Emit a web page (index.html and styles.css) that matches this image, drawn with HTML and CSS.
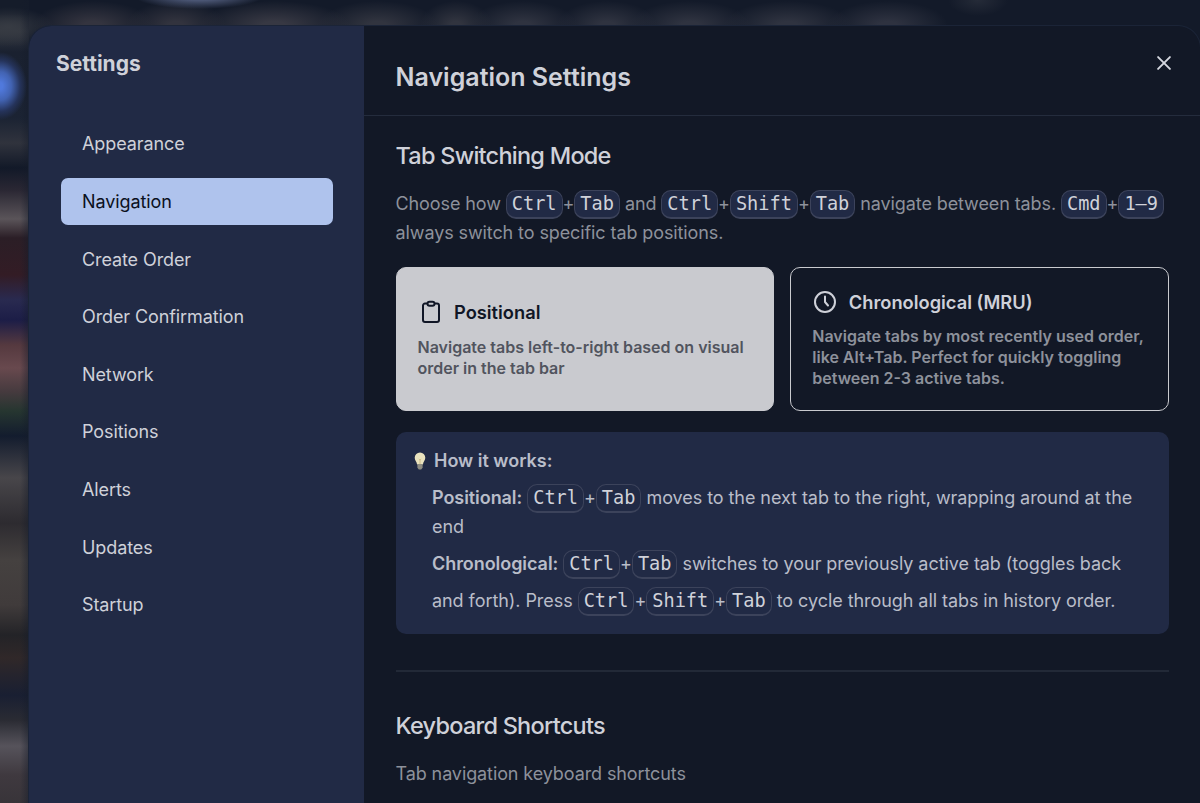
FILE: index.html
```html
<!DOCTYPE html>
<html lang="en">
<head>
  <meta charset="UTF-8">
  <meta name="viewport" content="width=device-width, initial-scale=1.0">
  <title>Settings</title>
  <link rel="stylesheet" href="styles.css">
</head>
<body>
  <div class="modal">
    <aside class="sidebar">
      <h2 class="sidebar-title">Settings</h2>
      <nav class="menu">
        <a class="menu-item">Appearance</a>
        <a class="menu-item active">Navigation</a>
        <a class="menu-item">Create Order</a>
        <a class="menu-item">Order Confirmation</a>
        <a class="menu-item">Network</a>
        <a class="menu-item">Positions</a>
        <a class="menu-item">Alerts</a>
        <a class="menu-item">Updates</a>
        <a class="menu-item">Startup</a>
      </nav>
    </aside>

    <main class="content">
      <header class="content-header">
        <h1 class="page-title">Navigation Settings</h1>
        <button class="close" aria-label="Close">
          <svg width="14" height="14" viewBox="0 0 14 14" fill="none" stroke="currentColor" stroke-width="1.9" stroke-linecap="round"><path d="M1.1 1.1l11.8 11.8M12.9 1.1L1.1 12.9"/></svg>
        </button>
      </header>

      <section class="section">
        <h3 class="section-title">Tab Switching Mode</h3>
        <p class="lead">Choose how <kbd>Ctrl</kbd>+<kbd>Tab</kbd> and <kbd>Ctrl</kbd>+<kbd>Shift</kbd>+<kbd>Tab</kbd> navigate between tabs. <kbd>Cmd</kbd>+<kbd>1–9</kbd><br>always switch to specific tab positions.</p>

        <div class="modes">
          <div class="mode selected">
            <div class="mode-head">
              <svg class="mode-icon" viewBox="0 0 24 24" fill="none" stroke="currentColor" stroke-width="2" stroke-linejoin="round" stroke-linecap="round"><path d="M9 3.5H7a2 2 0 0 0-2 2V20a2 2 0 0 0 2 2h12a2 2 0 0 0 2-2V5.500a2 2 0 0 0-2-2h-2"/><rect x="9.500" y="1.800" width="7" height="4" rx="2"/></svg>
              <span class="mode-name">Positional</span>
            </div>
            <p class="mode-text">Navigate tabs left-to-right based on visual<br>order in the tab bar</p>
          </div>
          <div class="mode">
            <div class="mode-head">
              <svg class="mode-icon" viewBox="0 0 24 24" fill="none" stroke="currentColor" stroke-width="2" stroke-linejoin="round" stroke-linecap="round"><circle cx="13" cy="12" r="10"/><path d="M13 6.500V12l3 3.500"/></svg>
              <span class="mode-name">Chronological (MRU)</span>
            </div>
            <p class="mode-text">Navigate tabs by most recently used order,<br>like Alt+Tab. Perfect for quickly toggling<br>between 2-3 active tabs.</p>
          </div>
        </div>

        <div class="info">
          <div class="info-title">
            <svg class="bulb" viewBox="0 0 12 18"><path d="M6 .5A5.300 5.300 0 0 0 .7 5.800c0 2.600 2 3.800 2.400 6.700h5.800c.4-2.900 2.400-4.100 2.400-6.700A5.300 5.300 0 0 0 6 .5z" fill="#e9e2bd"/><path d="M4.800 7l1.200 1 1.200-1M6 8v4.500" stroke="#c3ad72" stroke-width=".7" fill="none"/><path d="M3.400 12.500h5.200v3.200L7.200 17.500H4.800l-1.400-1.800z" fill="#8e8d82"/></svg>
            <strong>How it works:</strong>
          </div>
          <p><strong>Positional:</strong> <kbd>Ctrl</kbd>+<kbd>Tab</kbd> moves to the next tab to the right, wrapping around at the<br>end</p>
          <p class="tall"><strong>Chronological:</strong> <kbd>Ctrl</kbd>+<kbd>Tab</kbd> switches to your previously active tab (toggles back<br>and forth). Press <kbd>Ctrl</kbd>+<kbd>Shift</kbd>+<kbd>Tab</kbd> to cycle through all tabs in history order.</p>
        </div>

        <hr class="divider">

        <h3 class="section-title">Keyboard Shortcuts</h3>
        <p class="lead">Tab navigation keyboard shortcuts</p>
      </section>
    </main>
  </div>
</body>
</html>
```
FILE: styles.css
```css
* { margin: 0; padding: 0; box-sizing: border-box; }

/* Blurred app behind the dialog */
body {
  height: 803px;
  padding: 26px 0 0 29px;
  overflow: hidden;
  font-family: Inter, "Liberation Sans", sans-serif;
  font-size: 18px;
  letter-spacing: -0.1px;
  color: #cfd1d9;
  background:
    radial-gradient(ellipse 27px 34px at 0 86px, #5079dc 10%, #4263b2 42%, #25335a 75%, transparent) no-repeat,
    radial-gradient(ellipse 66px 14px at 199px -5px, #4a5573 40%, transparent) no-repeat,
    radial-gradient(ellipse 60px 24px at 93px 25px, #34343f 15%, transparent) no-repeat,
    radial-gradient(ellipse 50px 24px at 176px 25px, #32333e 15%, transparent) no-repeat,
    radial-gradient(ellipse 76px 24px at 274px 25px, #373843 15%, transparent) no-repeat,
    radial-gradient(ellipse 60px 24px at 378px 25px, #31343f 15%, transparent) no-repeat,
    radial-gradient(ellipse 36px 24px at 456px 25px, #31343f 15%, transparent) no-repeat,
    radial-gradient(ellipse 54px 24px at 523px 25px, #2f3340 15%, transparent) no-repeat,
    radial-gradient(ellipse 50px 24px at 607px 25px, #2f3340 15%, transparent) no-repeat,
    radial-gradient(ellipse 60px 24px at 690px 25px, #2f3340 15%, transparent) no-repeat,
    radial-gradient(ellipse 64px 24px at 788px 25px, #2f3340 15%, transparent) no-repeat,
    radial-gradient(ellipse 60px 24px at 888px 25px, #2e3240 15%, transparent) no-repeat,
    radial-gradient(ellipse 30px 16px at 978px 0, #252b38, transparent) no-repeat,
    linear-gradient(90deg, transparent 20px, #141b2a77) 0 0 / 29px 803px no-repeat,
    radial-gradient(ellipse 46px 20px at 8px 27px, #373b43, transparent) no-repeat,
    linear-gradient(#151c2a 0, #151c2a 14px, #343840 31px, #1a2130 52px, #1b2333 118px, #30333d 143px, #121928 168px,
      #2a2733 190px, #5a5459 219px, #2b1e26 238px, #331c25 275px, #292a50 300px, #1c1d47 320px,
      #55393f 345px, #68494e 368px, #453a3e 392px, #263630 411px, #131c2e 436px, #48464a 478px,
      #2d2b30 523px, #454140 560px, #403b3b 605px, #232327 635px, #302829 658px, #191f32 695px,
      #2a2b33 720px, #56535b 746px, #3f393f 775px, #383439 100%) 0 0 / 29px 803px no-repeat,
    #131a29;
}

strong { font-weight: 600; }

/* Dialog */
.modal {
  display: flex;
  height: 777px;
  border-radius: 22px 22px 0 0;
  overflow: hidden;
  background: #121826;
  box-shadow: 0 0 0 1px #1b2437;
}

/* Sidebar */
.sidebar {
  width: 335px;
  flex-shrink: 0;
  padding: 24px 31px 0 32px;
  background: #212a45;
}
.sidebar-title {
  margin-left: -5px;
  font-size: 21px;
  line-height: 28px;
  font-weight: 700;
  letter-spacing: 0;
}
.menu {
  display: flex;
  flex-direction: column;
  gap: 10.6px;
  margin-top: 42.4px;
}
.menu-item {
  height: 47px;
  padding-left: 21px;
  border-radius: 7px;
  font-size: 18px;
  line-height: 47.6px;
}
.menu-item.active { background: #afc3ed; color: #0b1020; }

/* Content */
.content { flex: 1; }
.content-header {
  display: flex;
  justify-content: space-between;
  height: 90px;
  padding: 29px 29px 0 31.5px;
  border-bottom: 1px solid #242c3d;
}
.page-title {
  font-size: 25px;
  line-height: 44px;
  font-weight: 600;
  letter-spacing: 0;
}
.close {
  display: flex;
  height: 14px;
  margin-top: 1px;
  border: none;
  background: none;
  color: #d5d7df;
}
.section { padding: 24px 31px 0 31.5px; }
.section-title {
  font-size: 23.5px;
  line-height: 32px;
  font-weight: 450;
  letter-spacing: -0.75px;
}
.lead {
  margin-top: 17px;
  font-size: 18px;
  line-height: 29px;
  color: #8d919b;
  white-space: nowrap;
}
kbd {
  display: inline-block;
  margin: -2px 0;
  padding: 0 5px;
  border: 1px solid #3c435b;
  border-bottom-width: 2px;
  border-radius: 10px;
  background: #212a45;
  color: #d0d2da;
  font-family: "DejaVu Sans Mono", monospace;
  font-size: 18.6px;
  line-height: 26px;
  letter-spacing: 0;
}

/* Mode cards */
.modes {
  display: grid;
  grid-template-columns: 1fr 1fr;
  gap: 16px;
  margin-top: 20px;
}
.mode {
  display: flex;
  flex-direction: column;
  justify-content: center;
  height: 143.5px;
  padding: 0 21px;
  border: 1.5px solid #c9cacf;
  border-radius: 10px;
  font-weight: 600;
  letter-spacing: 0;
  white-space: nowrap;
}
.mode.selected { background: #c9cacf; color: #101626; }
.mode-head {
  display: flex;
  align-items: center;
  gap: 12.5px;
  height: 26px;
}
.mode-icon { width: 24px; height: 24px; }
.mode-name { font-size: 18.3px; }
.mode-text {
  margin-top: 11.5px;
  font-size: 16px;
  line-height: 21px;
  color: #8d919b;
}
.selected .mode-text { color: #51545e; }

/* Info box */
.info {
  height: 202px;
  margin-top: 21.5px;
  padding: 14px 18px 0 36.5px;
  border-radius: 10px;
  background: #212a45;
  color: #b9bdc9;
  line-height: 29px;
  letter-spacing: -0.06px;
  white-space: nowrap;
}
.info-title {
  display: flex;
  align-items: center;
  gap: 8px;
  margin-left: -18px;
  letter-spacing: 0;
}
.bulb { width: 12px; height: 18px; }
.info p { margin-top: 8px; }
.info .tall { line-height: 37px; margin-top: 4px; }

.divider {
  margin: 36px 0 38px;
  border: none;
  border-top: 2px solid #222937;
}
```
